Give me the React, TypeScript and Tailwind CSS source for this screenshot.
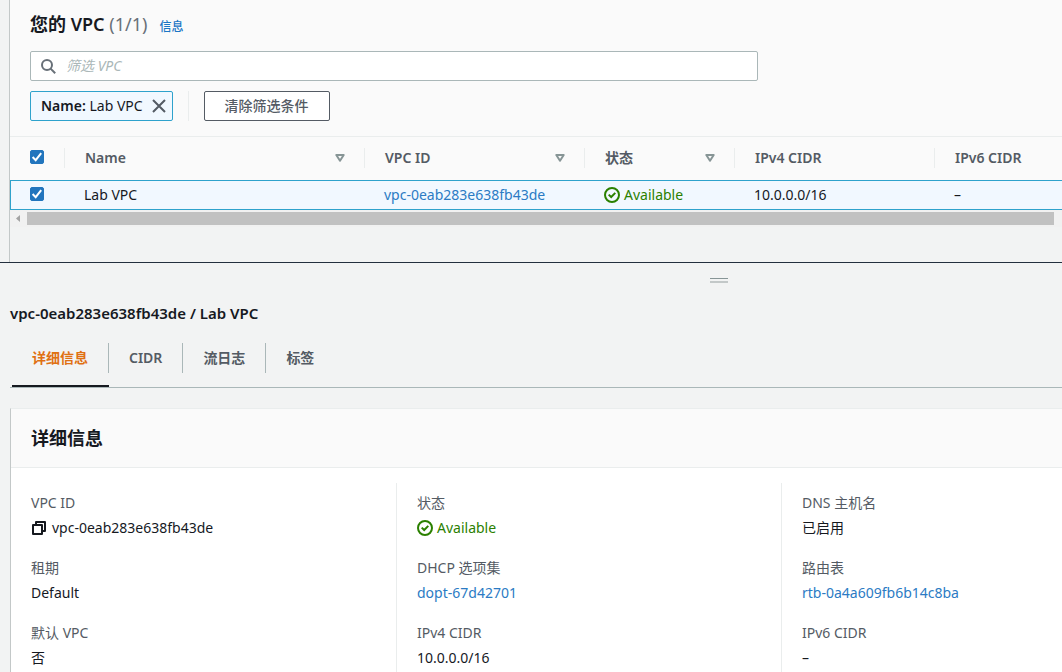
import type { ReactNode } from "react";

const vpc = {
  id: "vpc-0eab283e638fb43de",
  name: "Lab VPC",
  cidr: "10.0.0.0/16",
};

const columns = [
  { label: "Name", sortable: true, width: "w-[300px]" },
  { label: "VPC ID", sortable: true, width: "w-[220px]" },
  { label: "状态", sortable: true, width: "w-[150px]" },
  { label: "IPv4 CIDR", sortable: false, width: "w-[200px]" },
  { label: "IPv6 CIDR", sortable: false, width: "w-[200px]" },
];

const tabs = ["详细信息", "CIDR", "流日志", "标签"];

function Checkbox({ label }: { label: string }) {
  return (
    <label className="relative block size-3.5">
      <input
        type="checkbox"
        defaultChecked
        aria-label={label}
        className="peer block size-3.5 appearance-none rounded-xs border border-[#aab7b8] bg-white checked:border-[#2275bd] checked:bg-[#2275bd]"
      />
      <svg viewBox="0 0 14 14" className="pointer-events-none absolute inset-0 hidden size-3.5 peer-checked:block" fill="none" stroke="#fff" strokeWidth="2">
        <path d="M2.6 7 5.7 10.2 11.2 3.2" />
      </svg>
    </label>
  );
}

function SortIcon() {
  return (
    <svg viewBox="0 0 10 8" className="h-2 w-2.5" fill="none" stroke="#879596" strokeWidth="2" strokeLinejoin="round">
      <path d="M1.3 1h7.4L5 6.7z" />
    </svg>
  );
}

function Status() {
  return (
    <span className="flex items-center gap-1 text-[#2b8000]">
      <svg viewBox="0 0 16 16" className="size-4" fill="none" stroke="currentColor" strokeWidth="2">
        <circle cx="8" cy="8" r="7" />
        <path d="M4.7 7.6 7.2 10 11.3 5.9" />
      </svg>
      Available
    </span>
  );
}

function CopyIcon() {
  return (
    <svg viewBox="0 0 14 14" className="size-3.5" fill="none" stroke="#16191f" strokeWidth="2" strokeLinejoin="round">
      <path d="M1 4h9v9H1z" />
      <path d="M4 4V1h9v9h-3" />
    </svg>
  );
}

function Link({ children }: { children: ReactNode }) {
  return (
    <a href="#" className="text-[#2b7bc4] hover:underline">
      {children}
    </a>
  );
}

function Field({ label, children }: { label: string; children: ReactNode }) {
  return (
    <div>
      <dt className="text-[#545b64]">{label}</dt>
      <dd className="mt-[5px]">{children}</dd>
    </div>
  );
}

function VpcTable() {
  return (
    <div className="overflow-hidden">
      <table className="w-[1125px] table-fixed border-collapse text-left">
        <thead>
          <tr className="h-[43px] bg-[#fafafa] align-top text-[#545b64]">
            <th className="w-[55px] p-0 pt-[11px]">
              <div className="flex h-5 items-center border-r border-[#eaeded] pb-0.5 pl-5">
                <Checkbox label="全选" />
              </div>
            </th>
            {columns.map((col) => (
              <th key={col.label} className={`${col.width} p-0 pt-[11px] font-semibold`}>
                <div className="flex h-5 items-center justify-between border-r border-[#eaeded] pr-[19px] pl-5">
                  {col.label}
                  {col.sortable && (
                    <button type="button" aria-label={`${col.label} 排序`}>
                      <SortIcon />
                    </button>
                  )}
                </div>
              </th>
            ))}
          </tr>
        </thead>
        <tbody>
          <tr className="h-[30px] bg-[#f1f8ff] shadow-[inset_0_0_0_1px_#2ea2cc]">
            <td className="p-0 pb-0.5 pl-5">
              <Checkbox label={vpc.name} />
            </td>
            <td className="p-0 pl-[19px]">{vpc.name}</td>
            <td className="p-0 pl-[19px]">
              <Link>{vpc.id}</Link>
            </td>
            <td className="p-0 pl-[19px]">
              <Status />
            </td>
            <td className="p-0 pl-[19px]">{vpc.cidr}</td>
            <td className="p-0 pl-[19px]">–</td>
          </tr>
        </tbody>
      </table>
    </div>
  );
}

export default function App() {
  return (
    <div className="flex min-h-screen flex-col overflow-hidden bg-[#f2f3f3] font-['Noto_Sans','Noto_Sans_CJK_SC',sans-serif] text-sm leading-5 text-[#16191f]">
      <section className="ml-[9px] border-l border-[#c3c8c8] pb-[35px]">
        <div className="border-b border-[#eaeded] bg-[#fafafa] px-5 pt-2.5 pb-[15px]">
          <header className="flex items-baseline gap-3">
            <h1 className="text-lg leading-7 font-semibold">
              您的 VPC <span className="font-normal text-[#687078]">(1/1)</span>
            </h1>
            <a href="#" className="text-xs font-medium text-[#1b76c5]">信息</a>
          </header>
          <div className="mt-[13px] flex h-[30px] max-w-[728px] items-center gap-2.5 rounded-xs border border-[#aab7b8] bg-white pl-2.5">
            <svg viewBox="0 0 15 15" className="size-[15px]" fill="none" stroke="#687078" strokeWidth="2">
              <circle cx="6" cy="6" r="5" />
              <path d="m9.6 9.6 4.6 4.6" />
            </svg>
            <input type="text" aria-label="筛选 VPC" placeholder="筛选 VPC" className="min-w-0 flex-1 outline-none placeholder:text-[#aab7b8] placeholder:italic" />
          </div>
          <div className="mt-2.5 flex items-center">
            <div className="flex h-[30px] items-center gap-2 rounded-xs border border-[#2ea2cc] bg-[#f1f8ff] pr-[5px] pl-2.5">
              <span>
                <b className="font-semibold">Name:</b> {vpc.name}
              </span>
              <button type="button" aria-label="移除筛选条件">
                <svg viewBox="0 0 16 16" className="size-4" fill="none" stroke="#545b64" strokeWidth="2">
                  <path d="m2 2 12 12M14 2 2 14" />
                </svg>
              </button>
            </div>
            <div className="mx-[15px] h-[30px] w-px bg-[#eaeded]" />
            <button type="button" className="h-[30px] rounded-xs border border-[#545b64] bg-white px-5 font-medium text-[#545b64]">
              清除筛选条件
            </button>
          </div>
        </div>
        <VpcTable />
        <div className="flex h-[17px] items-center bg-[#f1f1f1] pr-2">
          <svg viewBox="0 0 17 17" className="size-[17px]" fill="#a3a3a3">
            <path d="M10 5v7L6 8.5z" />
          </svg>
          <div className="h-[13px] flex-1 bg-[#c1c1c1]" />
        </div>
      </section>

      <section className="flex flex-1 flex-col border-t border-[#232f3e]">
        <div className="flex h-[34px] justify-center pt-[15px] pl-[376px]">
          <div className="h-[5px] w-[18px] border-t border-b-2 border-t-[#879596] border-b-[#c3c8c8]" />
        </div>
        <div className="ml-2.5 flex flex-1 flex-col">
          <h2 className="pt-1.5 text-[15px] leading-5 font-semibold">
            {vpc.id} / {vpc.name}
          </h2>
          <div role="tablist" className="mt-5 flex border-b border-[#aab7b8] pl-0.5 font-semibold text-[#545b64]">
            {tabs.map((tab, i) => (
              <button
                key={tab}
                type="button"
                role="tab"
                aria-selected={i === 0}
                className="group h-[44px] border-b-2 border-transparent pb-3 aria-selected:border-[#16191f] aria-selected:text-[#e07012]"
              >
                <span className="flex h-[30px] items-center border-r border-[#aab7b8] px-5 group-last:border-r-0">{tab}</span>
              </button>
            ))}
          </div>

          <div className="mt-5 flex flex-1 flex-col border-t border-l border-t-[#eaeded] border-l-[#c3c8c8] bg-white">
            <h3 className="border-b border-[#eaeded] bg-[#fafafa] px-5 py-[15px] text-lg leading-7 font-semibold">详细信息</h3>
            <div className="grid flex-1 grid-cols-[386px_385px_1fr] divide-x divide-[#eaeded] pt-[15px]">
              <dl className="space-y-5 px-5 pt-2.5">
                <Field label="VPC ID">
                  <span className="flex items-center gap-1.5 pl-px">
                    <button type="button" aria-label="复制 VPC ID">
                      <CopyIcon />
                    </button>
                    {vpc.id}
                  </span>
                </Field>
                <Field label="租期">Default</Field>
                <Field label="默认 VPC">否</Field>
              </dl>
              <dl className="space-y-5 px-5 pt-2.5">
                <Field label="状态">
                  <Status />
                </Field>
                <Field label="DHCP 选项集">
                  <Link>dopt-67d42701</Link>
                </Field>
                <Field label="IPv4 CIDR">{vpc.cidr}</Field>
              </dl>
              <dl className="space-y-5 px-5 pt-2.5">
                <Field label="DNS 主机名">已启用</Field>
                <Field label="路由表">
                  <Link>rtb-0a4a609fb6b14c8ba</Link>
                </Field>
                <Field label="IPv6 CIDR">–</Field>
              </dl>
            </div>
          </div>
        </div>
      </section>
    </div>
  );
}
